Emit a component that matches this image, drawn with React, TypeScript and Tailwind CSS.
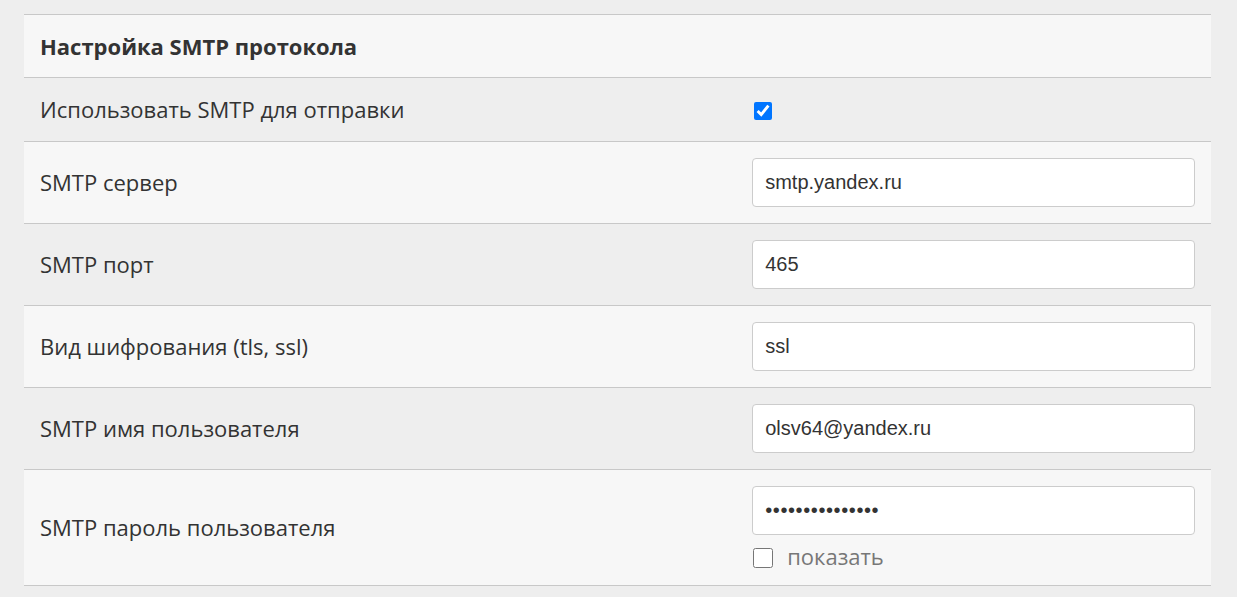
import { useState } from 'react';

const fields = [
  { label: 'SMTP сервер', value: 'smtp.yandex.ru' },
  { label: 'SMTP порт', value: '465' },
  { label: 'Вид шифрования (tls, ssl)', value: 'ssl' },
  { label: 'SMTP имя пользователя', value: 'olsv64@yandex.ru' },
];

const inputCls =
  'w-full h-[49px] px-3 bg-white border border-[#cccccc] rounded-[4px] text-[20px] text-[#333] outline-none';

export default function App() {
  const [useSmtp, setUseSmtp] = useState(true);
  const [show, setShow] = useState(false);
  const [values, setValues] = useState(fields.map(f => f.value));
  const [password, setPassword] = useState('0123456789abcde');

  return (
    <div className="min-h-screen bg-[#eeeeee] pt-[14px] pl-6 pr-[26px] text-[#333] font-['Open_Sans',sans-serif]">
      <table className="w-full border-collapse">
        <tbody>
          <tr className="bg-[#f7f7f7] border-y border-[#c8c8c8]">
            <th colSpan={2} className="h-[63px] px-4 text-left text-[22px] font-bold">
              Настройка SMTP протокола
            </th>
          </tr>

          <tr className="border-b border-[#c8c8c8]">
            <td className="w-[60%] h-[64px] px-4 text-[22px]">Использовать SMTP для отправки</td>
            <td className="px-4">
              <input
                type="checkbox"
                checked={useSmtp}
                onChange={e => setUseSmtp(e.target.checked)}
                className="w-[18px] h-[18px] ml-[2px] mt-[3px] accent-[#0075ff] block"
              />
            </td>
          </tr>

          {fields.map((f, i) => (
            <tr key={f.label} className={`border-b border-[#c8c8c8] ${i % 2 === 0 ? 'bg-[#f7f7f7]' : ''}`}>
              <td className="px-4 text-[22px]">{f.label}</td>
              <td className="px-4 py-4 font-['Liberation_Sans',Arial,sans-serif]">
                <input
                  className={inputCls}
                  value={values[i]}
                  onChange={e => setValues(v => v.map((x, j) => (j === i ? e.target.value : x)))}
                />
              </td>
            </tr>
          ))}

          <tr className="bg-[#f7f7f7] border-b border-[#c8c8c8]">
            <td className="px-4 text-[22px]">SMTP пароль пользователя</td>
            <td className="px-4 py-4">
              <input
                type={show ? 'text' : 'password'}
                className={`${inputCls} font-['Liberation_Sans',Arial,sans-serif] tracking-[0.6px]`}
                value={password}
                onChange={e => setPassword(e.target.value)}
              />
              <label className="flex items-center gap-[14px] mt-[8px] h-[26px] text-[22px] text-[#777]">
                <input
                  type="checkbox"
                  checked={show}
                  onChange={e => setShow(e.target.checked)}
                  className="w-[20px] h-[20px] ml-[1px] mt-[4px]"
                />
                показать
              </label>
            </td>
          </tr>
        </tbody>
      </table>
    </div>
  );
}
